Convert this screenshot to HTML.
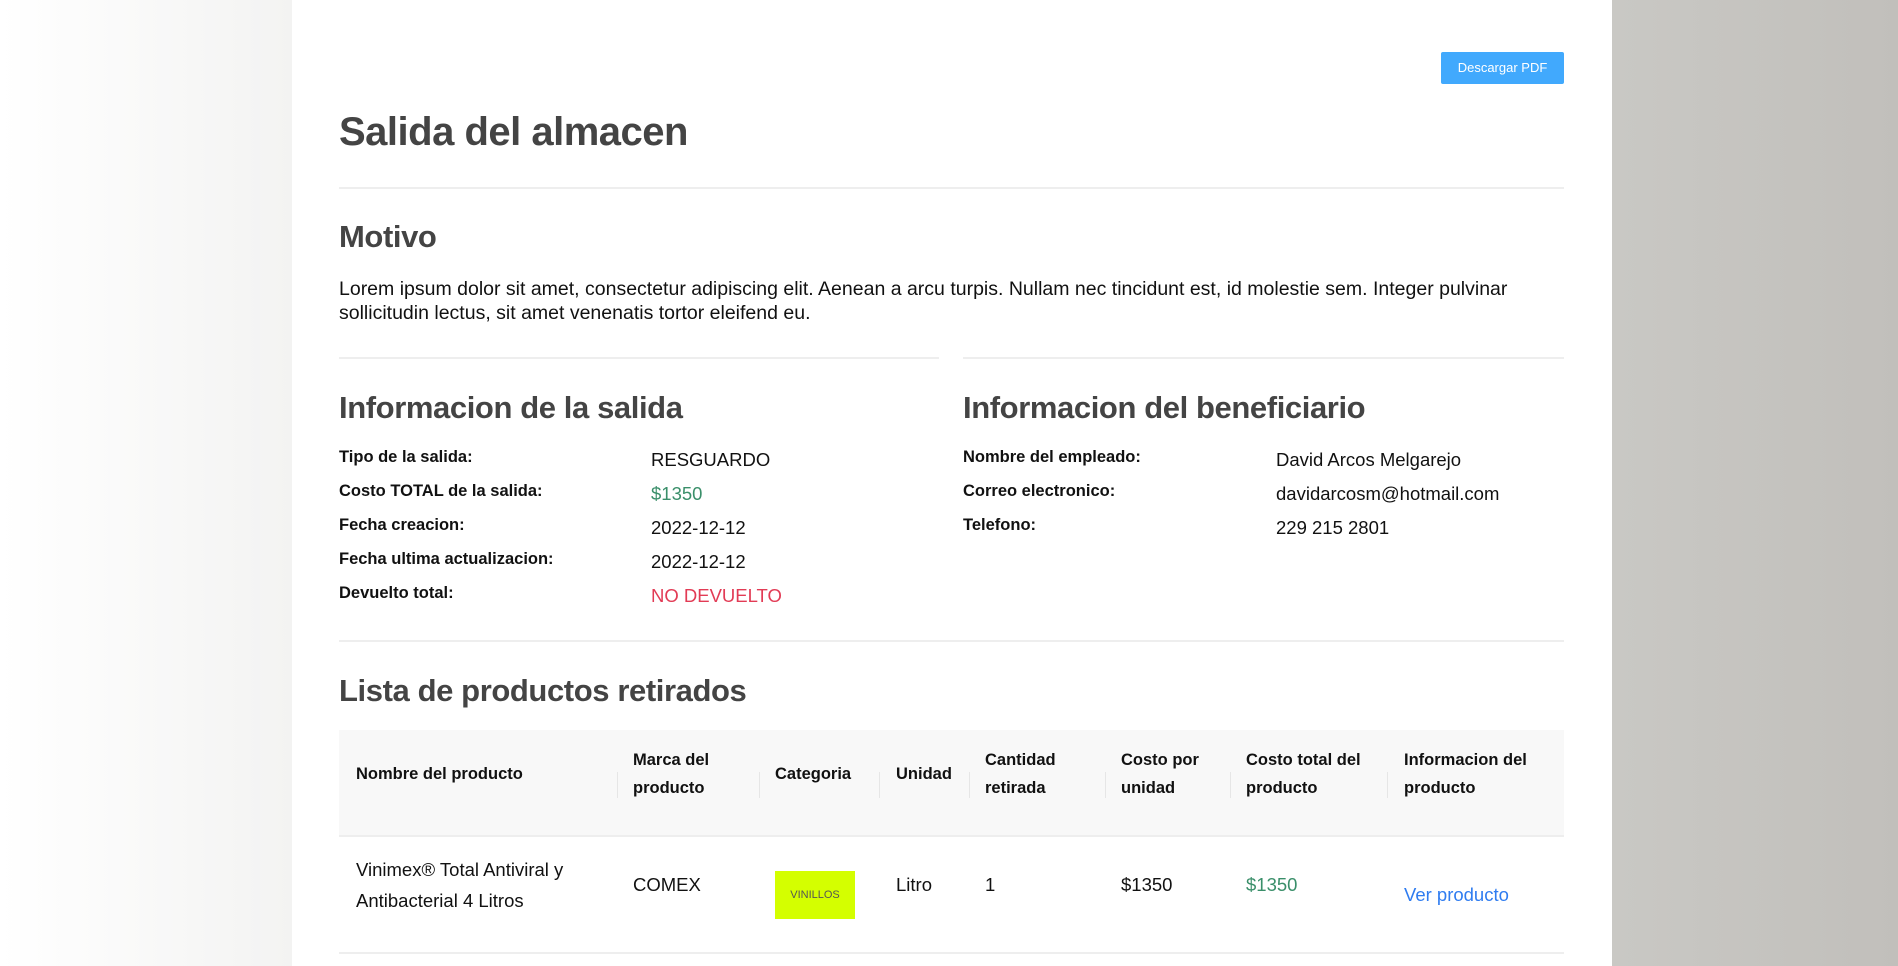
<!DOCTYPE html>
<html><head><meta charset="utf-8"><style>
*{margin:0;padding:0;box-sizing:border-box}
body{width:1898px;height:966px;overflow:hidden;font-family:"Liberation Sans",sans-serif;color:#111;position:relative;background:#fff}
.lb{position:absolute;left:0;top:0;width:292px;height:966px;background:linear-gradient(90deg,#fff,#f3f3f2)}
.rb{position:absolute;left:1612px;top:0;width:286px;height:966px;background:linear-gradient(90deg,#c9c8c4,#c1bfbb)}
.a{position:absolute;white-space:nowrap}
h1,h2{position:absolute;color:#444;font-weight:bold;white-space:nowrap}
h1{font-size:40px;left:339px;top:110px;letter-spacing:-0.5px}
h2{font-size:31px;left:339px;letter-spacing:-0.4px}
.hr{position:absolute;height:2px;background:#eeeeee}
.btn{position:absolute;left:1441px;top:52px;width:123px;height:32px;background:#41a9fd;color:#fff;font-size:13px;text-align:center;line-height:32px;border-radius:2px}
.p{font-size:19.5px;line-height:24px;left:339px;top:277px;color:#111}
.l{font-size:16.5px;font-weight:bold;color:#111}
.v{font-size:18.5px;color:#111}
.th{position:absolute;left:339px;top:730px;width:1225px;height:106px;background:#f8f8f8}
.hc{font-size:16.5px;font-weight:bold;line-height:28px}
.sep{position:absolute;width:1px;height:26px;top:772px;background:#e6e6e6}
.td{font-size:18.5px;line-height:31px}
</style></head><body>
<div class="lb"></div><div class="rb"></div>
<div class="btn">Descargar PDF</div>
<h1>Salida del almacen</h1>
<div class="hr" style="left:339px;top:187px;width:1225px"></div>
<h2 style="top:219px">Motivo</h2>
<div class="a p">Lorem ipsum dolor sit amet, consectetur adipiscing elit. Aenean a arcu turpis. Nullam nec tincidunt est, id molestie sem. Integer pulvinar<br>sollicitudin lectus, sit amet venenatis tortor eleifend eu.</div>
<div class="hr" style="left:339px;top:357px;width:600px"></div>
<div class="hr" style="left:963px;top:357px;width:601px"></div>
<h2 style="top:390px">Informacion de la salida</h2>
<h2 style="top:390px;left:963px">Informacion del beneficiario</h2>
<div class="a l" style="left:339px;top:448px">Tipo de la salida:</div>
<div class="a l" style="left:339px;top:482px">Costo TOTAL de la salida:</div>
<div class="a l" style="left:339px;top:516px">Fecha creacion:</div>
<div class="a l" style="left:339px;top:550px">Fecha ultima actualizacion:</div>
<div class="a l" style="left:339px;top:584px">Devuelto total:</div>
<div class="a v" style="left:651px;top:449px">RESGUARDO</div>
<div class="a v" style="left:651px;top:483px;color:#3a8f6a">$1350</div>
<div class="a v" style="left:651px;top:517px">2022-12-12</div>
<div class="a v" style="left:651px;top:551px">2022-12-12</div>
<div class="a v" style="left:651px;top:585px;color:#e23b55">NO DEVUELTO</div>
<div class="a l" style="left:963px;top:448px">Nombre del empleado:</div>
<div class="a l" style="left:963px;top:482px">Correo electronico:</div>
<div class="a l" style="left:963px;top:516px">Telefono:</div>
<div class="a v" style="left:1276px;top:449px">David Arcos Melgarejo</div>
<div class="a v" style="left:1276px;top:483px">davidarcosm@hotmail.com</div>
<div class="a v" style="left:1276px;top:517px">229 215 2801</div>
<div class="hr" style="left:339px;top:640px;width:1225px"></div>
<h2 style="top:673px">Lista de productos retirados</h2>
<div class="th"></div>
<div class="hr" style="left:339px;top:835px;width:1225px"></div>
<div class="sep" style="left:617px"></div><div class="sep" style="left:759px"></div><div class="sep" style="left:879px"></div><div class="sep" style="left:969px"></div><div class="sep" style="left:1105px"></div><div class="sep" style="left:1230px"></div><div class="sep" style="left:1387px"></div>
<div class="a hc" style="left:356px;top:760px">Nombre del producto</div>
<div class="a hc" style="left:633px;top:746px">Marca del<br>producto</div>
<div class="a hc" style="left:775px;top:760px">Categoria</div>
<div class="a hc" style="left:896px;top:760px">Unidad</div>
<div class="a hc" style="left:985px;top:746px">Cantidad<br>retirada</div>
<div class="a hc" style="left:1121px;top:746px">Costo por<br>unidad</div>
<div class="a hc" style="left:1246px;top:746px">Costo total del<br>producto</div>
<div class="a hc" style="left:1404px;top:746px">Informacion del<br>producto</div>
<div class="a td" style="left:356px;top:854px">Vinimex® Total Antiviral y<br>Antibacterial 4 Litros</div>
<div class="a td" style="left:633px;top:869px">COMEX</div>
<div class="a" style="left:775px;top:871px;width:80px;height:48px;background:#d4ff00;font-size:11px;line-height:48px;text-align:center;color:#555">VINILLOS</div>
<div class="a td" style="left:896px;top:869px">Litro</div>
<div class="a td" style="left:985px;top:869px">1</div>
<div class="a td" style="left:1121px;top:869px">$1350</div>
<div class="a td" style="left:1246px;top:869px;color:#3a8f6a">$1350</div>
<div class="a td" style="left:1404px;top:879px;color:#2f7cf0">Ver producto</div>
<div class="hr" style="left:339px;top:952px;width:1225px"></div>
</body></html>
